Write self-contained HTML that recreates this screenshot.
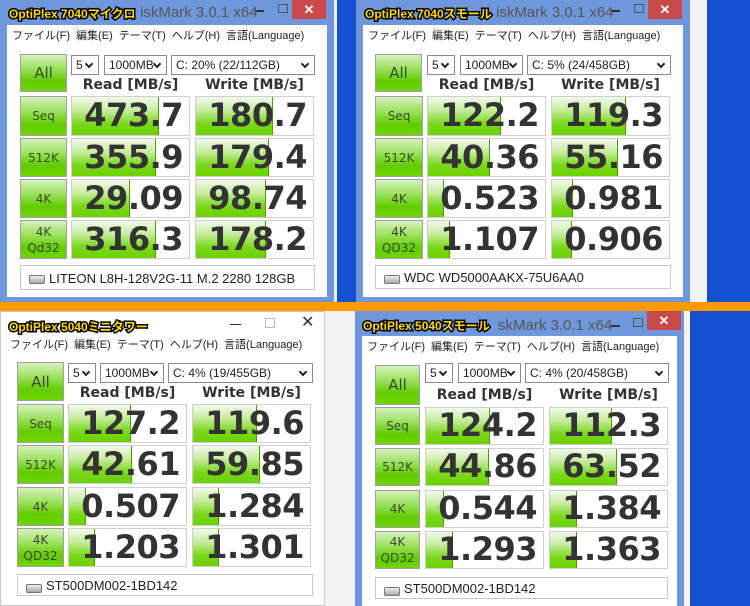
<!DOCTYPE html>
<html><head><meta charset="utf-8"><style>
*{margin:0;padding:0;box-sizing:border-box}
body{width:750px;height:606px;overflow:hidden;position:relative;background:#1550d0;font-family:"Liberation Sans","Noto Sans CJK JP",sans-serif}
.abs{position:absolute}
.win{position:absolute;background:#6f97dc}
.win.w10{background:#fff;border:1px solid #c8c8c8}
.client{position:absolute;background:#fff}
.menu{position:absolute;font-size:11px;color:#222;white-space:nowrap}
.menu span{margin-right:6px}
.ttl{position:absolute;font-size:15px;color:#555;white-space:nowrap}
.ov{position:absolute;font-family:"Liberation Sans","Noto Sans CJK JP",sans-serif;font-weight:bold;font-size:12px;color:#ffd800;white-space:nowrap;-webkit-text-stroke:3px #000;paint-order:stroke fill}
.btn{position:absolute;border:1px solid #a0a0a0;background:linear-gradient(#d6f2bc 0%,#98e058 40%,#62cc00 72%,#70d400 100%);color:#3a4a2a;font-size:12px;text-align:center;display:flex;align-items:center;justify-content:center;line-height:16px;font-family:"DejaVu Sans",sans-serif}
.btn.all{font-size:15px}
.cell{position:absolute;border:1px solid #cfcfcf;background:#fff;overflow:hidden}
.cell .f{position:absolute;left:0;top:0;bottom:0;background:linear-gradient(#f2faec 0%,#c6ec9e 35%,#7ad81c 70%,#6cd200 100%);border-right:1px solid #4aa000}
.cell .n{position:absolute;right:6px;top:50%;transform:translateY(-52%);font-family:"DejaVu Sans",sans-serif;font-weight:bold;font-size:32px;color:#333;letter-spacing:-0.5px}
.combo{position:absolute;border:1px solid #8a8a8a;background:#fff;font-size:12px;color:#222;padding-left:4px;line-height:18px;white-space:nowrap}
.combo:after{content:"";position:absolute;right:6px;top:5px;width:4px;height:4px;border-right:2px solid #222;border-bottom:2px solid #222;transform:rotate(45deg)}
.hdr{position:absolute;font-family:"DejaVu Sans",sans-serif;font-weight:bold;font-size:14px;color:#333;text-align:center;width:119px}
.drv{position:absolute;border:1px solid #c8c8c8;background:#fff;font-size:13px;color:#222;padding-left:28px;line-height:21px;white-space:nowrap}
.drv:before{content:"";position:absolute;left:8px;top:9px;width:14px;height:7px;border:1px solid #777;border-radius:2px;background:linear-gradient(#eee,#aaa)}
.close{position:absolute;background:#c9484a;color:#fff;font-size:13px;text-align:center;line-height:19px;font-weight:bold}
</style></head><body>
<div class="abs" style="left:334px;top:0;width:3px;height:302px;background:#eef2f8"></div>
<div class="abs" style="left:690px;top:0;width:17px;height:302px;background:#f4f4f4"></div>
<div class="abs" style="left:684px;top:311px;width:6px;height:295px;background:#f4f4f4"></div>
<div class="abs" style="left:325px;top:311px;width:30px;height:295px;background:#f2f2f2"></div>

<div class="win" style="left:0;top:0;width:334px;height:302px">
 <div class="ttl" style="left:140px;top:4px">iskMark 3.0.1 x64</div>
 <div class="abs" style="left:255px;top:10px;width:9px;height:2px;background:#333"></div>
 <div class="abs" style="left:278px;top:4px;width:10px;height:9px;border:1px solid #555"></div>
 <div class="close" style="left:292px;top:0;width:34px;height:19px">✕</div>
 <div class="ov" style="left:9px;top:5px">OptiPlex 7040マイクロ</div>
 <div class="client" style="left:7px;top:25px;width:320px;height:272px"></div>
 <div class="menu" style="left:12px;top:27px"><span>ファイル(F)</span><span>編集(E)</span><span>テーマ(T)</span><span>ヘルプ(H)</span><span>言語(Language)</span></div>
 <div class="btn all" style="left:20px;top:54px;width:47px;height:38px">All</div>
 <div class="combo" style="left:71px;top:55px;width:28px;height:20px">5</div>
 <div class="combo" style="left:104px;top:55px;width:63px;height:20px">1000MB</div>
 <div class="combo" style="left:171px;top:55px;width:144px;height:20px">C: 20% (22/112GB)</div>
 <div class="hdr" style="left:71px;top:77px">Read [MB/s]</div>
 <div class="hdr" style="left:195px;top:77px">Write [MB/s]</div>
 <div class="btn" style="left:20px;top:96px;width:47px;height:40px">Seq</div>
 <div class="cell" style="left:71px;top:96px;width:119px;height:40px"><div class="f" style="width:87px"></div><div class="n">473.7</div></div>
 <div class="cell" style="left:195px;top:96px;width:119px;height:40px"><div class="f" style="width:77px"></div><div class="n">180.7</div></div>
 <div class="btn" style="left:20px;top:138px;width:47px;height:39px">512K</div>
 <div class="cell" style="left:71px;top:138px;width:119px;height:39px"><div class="f" style="width:84px"></div><div class="n">355.9</div></div>
 <div class="cell" style="left:195px;top:138px;width:119px;height:39px"><div class="f" style="width:73px"></div><div class="n">179.4</div></div>
 <div class="btn" style="left:20px;top:179px;width:47px;height:39px">4K</div>
 <div class="cell" style="left:71px;top:179px;width:119px;height:39px"><div class="f" style="width:58px"></div><div class="n">29.09</div></div>
 <div class="cell" style="left:195px;top:179px;width:119px;height:39px"><div class="f" style="width:70px"></div><div class="n">98.74</div></div>
 <div class="btn" style="left:20px;top:220px;width:47px;height:39px">4K<br>Qd32</div>
 <div class="cell" style="left:71px;top:220px;width:119px;height:39px"><div class="f" style="width:84px"></div><div class="n">316.3</div></div>
 <div class="cell" style="left:195px;top:220px;width:119px;height:39px"><div class="f" style="width:70px"></div><div class="n">178.2</div></div>
 <div class="drv" style="left:20px;top:265px;width:295px;height:25px;line-height:25px">LITEON L8H-128V2G-11 M.2 2280 128GB</div>
</div>

<div class="win" style="left:356px;top:0;width:334px;height:302px">
 <div class="ttl" style="left:140px;top:4px">iskMark 3.0.1 x64</div>
 <div class="abs" style="left:255px;top:10px;width:9px;height:2px;background:#333"></div>
 <div class="abs" style="left:278px;top:4px;width:10px;height:9px;border:1px solid #555"></div>
 <div class="close" style="left:292px;top:0;width:34px;height:19px">✕</div>
 <div class="ov" style="left:9px;top:5px">OptiPlex 7040スモール</div>
 <div class="client" style="left:7px;top:25px;width:320px;height:272px"></div>
 <div class="menu" style="left:12px;top:27px"><span>ファイル(F)</span><span>編集(E)</span><span>テーマ(T)</span><span>ヘルプ(H)</span><span>言語(Language)</span></div>
 <div class="btn all" style="left:19px;top:54px;width:47px;height:38px">All</div>
 <div class="combo" style="left:71px;top:55px;width:28px;height:20px">5</div>
 <div class="combo" style="left:104px;top:55px;width:63px;height:20px">1000MB</div>
 <div class="combo" style="left:171px;top:55px;width:144px;height:20px">C: 5% (24/458GB)</div>
 <div class="hdr" style="left:71px;top:77px">Read [MB/s]</div>
 <div class="hdr" style="left:195px;top:77px">Write [MB/s]</div>
 <div class="btn" style="left:19px;top:96px;width:48px;height:40px">Seq</div>
 <div class="cell" style="left:71px;top:96px;width:119px;height:40px"><div class="f" style="width:73px"></div><div class="n">122.2</div></div>
 <div class="cell" style="left:195px;top:96px;width:119px;height:40px"><div class="f" style="width:74px"></div><div class="n">119.3</div></div>
 <div class="btn" style="left:19px;top:138px;width:48px;height:39px">512K</div>
 <div class="cell" style="left:71px;top:138px;width:119px;height:39px"><div class="f" style="width:62px"></div><div class="n">40.36</div></div>
 <div class="cell" style="left:195px;top:138px;width:119px;height:39px"><div class="f" style="width:66px"></div><div class="n">55.16</div></div>
 <div class="btn" style="left:19px;top:179px;width:48px;height:39px">4K</div>
 <div class="cell" style="left:71px;top:179px;width:119px;height:39px"><div class="f" style="width:16px"></div><div class="n">0.523</div></div>
 <div class="cell" style="left:195px;top:179px;width:119px;height:39px"><div class="f" style="width:21px"></div><div class="n">0.981</div></div>
 <div class="btn" style="left:19px;top:220px;width:48px;height:39px">4K<br>QD32</div>
 <div class="cell" style="left:71px;top:220px;width:119px;height:39px"><div class="f" style="width:22px"></div><div class="n">1.107</div></div>
 <div class="cell" style="left:195px;top:220px;width:119px;height:39px"><div class="f" style="width:20px"></div><div class="n">0.906</div></div>
 <div class="drv" style="left:19px;top:265px;width:296px;height:24px;line-height:24px">WDC WD5000AAKX-75U6AA0</div>
</div>

<div class="abs" style="left:0;top:302px;width:750px;height:9px;background:#ff9a00"></div>

<div class="win w10" style="left:0;top:311px;width:325px;height:295px">
 <div class="ov" style="left:8px;top:6px">OptiPlex 5040ミニタワー</div>
 <div class="abs" style="left:229px;top:12px;width:11px;height:1px;background:#333"></div>
 <div class="abs" style="left:264px;top:6px;width:10px;height:10px;border:1px solid #bbb"></div>
 <div class="abs" style="left:300px;top:0px;font-size:16px;color:#333">✕</div>
 <div class="menu" style="left:9px;top:24px"><span>ファイル(F)</span><span>編集(E)</span><span>テーマ(T)</span><span>ヘルプ(H)</span><span>言語(Language)</span></div>
 <div class="btn all" style="left:16px;top:50px;width:47px;height:39px">All</div>
 <div class="combo" style="left:67px;top:51px;width:28px;height:20px">5</div>
 <div class="combo" style="left:99px;top:51px;width:64px;height:20px">1000MB</div>
 <div class="combo" style="left:167px;top:51px;width:145px;height:20px">C: 4% (19/455GB)</div>
 <div class="hdr" style="left:67px;top:73px">Read [MB/s]</div>
 <div class="hdr" style="left:191px;top:73px">Write [MB/s]</div>
 <div class="btn" style="left:16px;top:92px;width:47px;height:39px">Seq</div>
 <div class="cell" style="left:67px;top:92px;width:119px;height:39px"><div class="f" style="width:62px"></div><div class="n">127.2</div></div>
 <div class="cell" style="left:191px;top:92px;width:119px;height:39px"><div class="f" style="width:64px"></div><div class="n">119.6</div></div>
 <div class="btn" style="left:16px;top:133px;width:47px;height:39px">512K</div>
 <div class="cell" style="left:67px;top:133px;width:119px;height:39px"><div class="f" style="width:63px"></div><div class="n">42.61</div></div>
 <div class="cell" style="left:191px;top:133px;width:119px;height:39px"><div class="f" style="width:67px"></div><div class="n">59.85</div></div>
 <div class="btn" style="left:16px;top:175px;width:47px;height:39px">4K</div>
 <div class="cell" style="left:67px;top:175px;width:119px;height:39px"><div class="f" style="width:17px"></div><div class="n">0.507</div></div>
 <div class="cell" style="left:191px;top:175px;width:119px;height:39px"><div class="f" style="width:26px"></div><div class="n">1.284</div></div>
 <div class="btn" style="left:16px;top:216px;width:47px;height:39px">4K<br>QD32</div>
 <div class="cell" style="left:67px;top:216px;width:119px;height:39px"><div class="f" style="width:26px"></div><div class="n">1.203</div></div>
 <div class="cell" style="left:191px;top:216px;width:119px;height:39px"><div class="f" style="width:26px"></div><div class="n">1.301</div></div>
 <div class="drv" style="left:16px;top:262px;width:296px;height:22px">ST500DM002-1BD142</div>
</div>

<div class="win" style="left:355px;top:311px;width:329px;height:295px">
 <div class="ttl" style="left:143px;top:6px">skMark 3.0.1 x64</div>
 <div class="abs" style="left:256px;top:14px;width:9px;height:2px;background:#333"></div>
 <div class="abs" style="left:278px;top:7px;width:10px;height:9px;border:1px solid #555"></div>
 <div class="close" style="left:292px;top:0;width:34px;height:19px">✕</div>
 <div class="ov" style="left:8px;top:6px">OptiPlex 5040スモール</div>
 <div class="client" style="left:7px;top:25px;width:315px;height:270px"></div>
 <div class="menu" style="left:12px;top:27px"><span>ファイル(F)</span><span>編集(E)</span><span>テーマ(T)</span><span>ヘルプ(H)</span><span>言語(Language)</span></div>
 <div class="btn all" style="left:20px;top:54px;width:45px;height:40px">All</div>
 <div class="combo" style="left:70px;top:52px;width:28px;height:20px">5</div>
 <div class="combo" style="left:103px;top:52px;width:63px;height:20px">1000MB</div>
 <div class="combo" style="left:170px;top:52px;width:144px;height:20px">C: 4% (20/458GB)</div>
 <div class="hdr" style="left:70px;top:76px">Read [MB/s]</div>
 <div class="hdr" style="left:194px;top:76px">Write [MB/s]</div>
 <div class="btn" style="left:20px;top:96px;width:45px;height:38px">Seq</div>
 <div class="cell" style="left:70px;top:96px;width:119px;height:38px"><div class="f" style="width:64px"></div><div class="n">124.2</div></div>
 <div class="cell" style="left:194px;top:96px;width:119px;height:38px"><div class="f" style="width:62px"></div><div class="n">112.3</div></div>
 <div class="btn" style="left:20px;top:137px;width:45px;height:38px">512K</div>
 <div class="cell" style="left:70px;top:137px;width:119px;height:38px"><div class="f" style="width:63px"></div><div class="n">44.86</div></div>
 <div class="cell" style="left:194px;top:137px;width:119px;height:38px"><div class="f" style="width:67px"></div><div class="n">63.52</div></div>
 <div class="btn" style="left:20px;top:179px;width:45px;height:38px">4K</div>
 <div class="cell" style="left:70px;top:179px;width:119px;height:38px"><div class="f" style="width:18px"></div><div class="n">0.544</div></div>
 <div class="cell" style="left:194px;top:179px;width:119px;height:38px"><div class="f" style="width:27px"></div><div class="n">1.384</div></div>
 <div class="btn" style="left:20px;top:220px;width:45px;height:38px">4K<br>QD32</div>
 <div class="cell" style="left:70px;top:220px;width:119px;height:38px"><div class="f" style="width:27px"></div><div class="n">1.293</div></div>
 <div class="cell" style="left:194px;top:220px;width:119px;height:38px"><div class="f" style="width:27px"></div><div class="n">1.363</div></div>
 <div class="drv" style="left:20px;top:266px;width:293px;height:22px">ST500DM002-1BD142</div>
</div>
</body></html>
